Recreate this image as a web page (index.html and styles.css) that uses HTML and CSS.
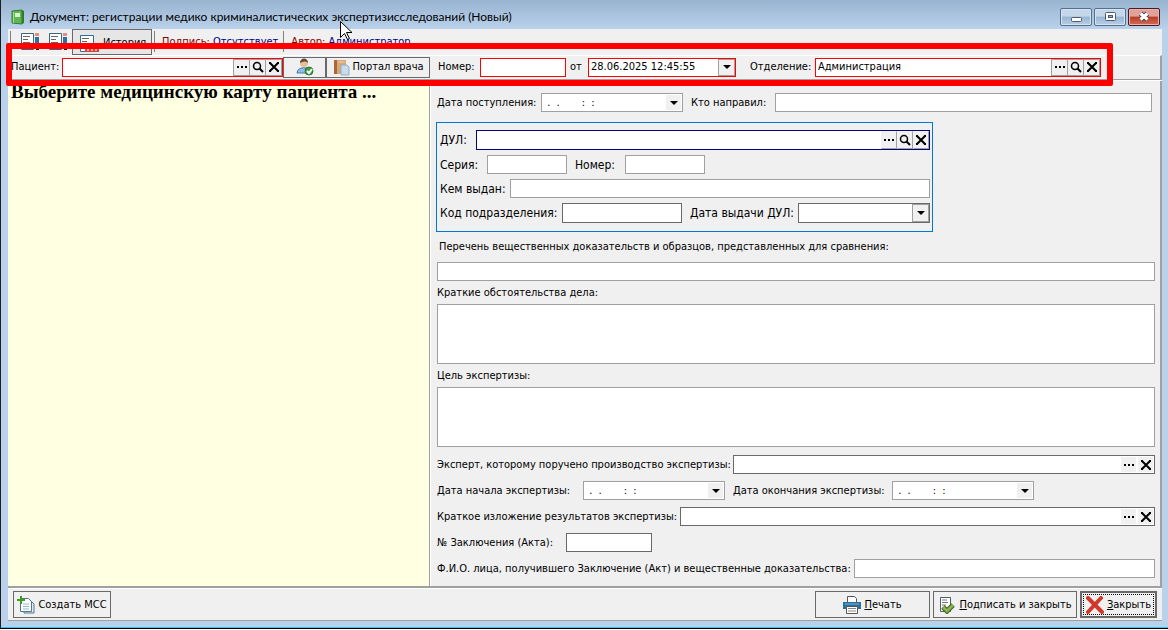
FILE: index.html
```html
<!DOCTYPE html>
<html lang="ru">
<head>
    <meta charset="UTF-8">
    <meta name="viewport" content="width=device-width, initial-scale=1.0">
    <title>Документ: регистрации медико криминалистических экспертизисследований</title>
    <link rel="stylesheet" href="styles.css">
</head>
<body>
    <!-- shared glyphs -->
    <svg class="sprite" aria-hidden="true">
        <symbol id="dots" viewBox="0 0 16 16"><path d="M3 7h2v2H3zM7 7h2v2H7zM11 7h2v2h-2z"/></symbol>
        <symbol id="search" viewBox="0 0 16 16"><circle cx="7" cy="7" r="3.500" fill="none" stroke="#000" stroke-width="1.500"/><path d="M9.500 9.500l3.500 3.500" stroke="#000" stroke-width="2"/></symbol>
        <symbol id="cross" viewBox="0 0 16 16"><path d="M4 4l8 8M12 4l-8 8" stroke="#000" stroke-width="2"/><path d="M3 3h2v2H3zM11 3h2v2h-2zM3 11h2v2H3zM11 11h2v2h-2z"/></symbol>
        <symbol id="arrow" viewBox="0 0 16 16"><path d="M4 6h8l-4 4z"/></symbol>
        <symbol id="doc" viewBox="0 0 20 18"><path d="M1.500 1.500h12v16h-12z" fill="#fff" stroke="#3c6480"/><path d="M3 4.500h7M3 7.500h5M3 10.500h7M3 13.500h5" stroke="#666"/><path d="M15 1h4v3h-4z" fill="#e88a84"/><path d="M15 5h4v7h-4z" fill="#2871a3"/><path d="M16 16h3v2h-3z" fill="#111"/></symbol>
    </svg>

    <div class="window">
        <header class="title-bar">
            <svg class="app-icon" viewBox="0 0 16 16"><path d="M2 2l10-1v14l-10-1z" fill="#62b455" stroke="#2d7d2a"/><path d="M12 1l2 1v12l-2 1z" fill="#2f7d2c"/><path d="M5 4h5v4H5z" fill="#d6f2cf"/><path d="M3.500 3v11" stroke="#a5dd98"/></svg>
            <h1 class="title">Документ: регистрации медико криминалистических экспертизисследований (Новый)</h1>
            <div class="window-buttons">
                <button class="win-btn" aria-label="Свернуть"><svg viewBox="0 0 30 16"><rect x="10.500" y="8.500" width="10" height="4" rx="1" fill="#fff" stroke="#4f5a68"/></svg></button>
                <button class="win-btn" aria-label="Развернуть"><svg viewBox="0 0 30 16"><rect x="10.500" y="3.500" width="10" height="8" rx="1" fill="#fff" stroke="#4f5a68"/><rect x="13.500" y="6.500" width="4" height="2" fill="#8fadca" stroke="#4f5a68"/></svg></button>
                <button class="win-btn win-close" aria-label="Закрыть окно"><svg viewBox="0 0 30 16"><path d="M11.500 4.500l7 6M18.500 4.500l-7 6" stroke="#4f4650" stroke-width="5"/><path d="M11.500 4.500l7 6M18.500 4.500l-7 6" stroke="#fff" stroke-width="3"/></svg></button>
            </div>
        </header>

        <div class="client">
            <div class="toolbar">
                <span class="divider"></span>
                <button class="tool" aria-label="Подписи"><svg class="doc-icon"><use href="#doc"/></svg></button>
                <button class="tool" aria-label="Связи"><svg class="doc-icon"><use href="#doc"/></svg></button>
                <button class="tool history"><svg class="doc-icon" viewBox="0 0 20 18"><path d="M1.500 1.500h13v16h-13z" fill="#fff" stroke="#2f6f99"/><path d="M3 4.500h7M3 7.500h5M3 10.500h7" stroke="#666"/><path d="M6 14h14v4H6z" fill="#c94840"/><path d="M8 16h2M12 16h2M16 16h2" stroke="#fff"/></svg>История</button>
                <span class="divider"></span>
                <span class="status"><span class="status-name">Подпись:</span> Отсутствует</span>
                <span class="divider"></span>
                <span class="status"><span class="status-name">Автор:</span> Администратор</span>
            </div>

            <div class="record-bar">
                <label class="l-patient" for="patient">Пациент:</label>
                <div class="field required f-patient">
                    <input type="text" id="patient">
                    <button class="boxed" aria-label="Выбрать пациента"><svg><use href="#dots"/></svg></button>
                    <button class="boxed" aria-label="Найти пациента"><svg><use href="#search"/></svg></button>
                    <button class="boxed" aria-label="Очистить пациента"><svg><use href="#cross"/></svg></button>
                </div>
                <button class="btn person" aria-label="Карта пациента"><svg viewBox="0 0 18 18"><circle cx="8" cy="5" r="4" fill="#e9bd96"/><path d="M4 5c0-6 8-6 8 0-2-2-5-2-8 0z" fill="#5c4a3c"/><path d="M1 15c0-7 13-7 14 0z" fill="#8dbde8" stroke="#4b7cab"/><circle cx="13" cy="13" r="4" fill="#3f9d49" stroke="#277832"/><path d="M11 13l2 2 3-4" fill="none" stroke="#fff" stroke-width="2"/></svg></button>
                <button class="btn portal"><svg viewBox="0 0 18 18"><path d="M2 2h12v14H2z" fill="#d9a777"/><path d="M2 2h3v14H2z" fill="#a8683a"/><path d="M6 4h7" stroke="#f0d0ae"/><path d="M9 7h6l2 2v8H9z" fill="#c7dced" stroke="#8fadc5"/></svg>Портал врача</button>

                <label class="l-number" for="number">Номер:</label>
                <div class="field required f-number"><input type="text" id="number"></div>
                <label class="l-from" for="created">от</label>
                <div class="field required f-created">
                    <input type="text" id="created" value="28.06.2025 12:45:55">
                    <button class="boxed" aria-label="Календарь"><svg><use href="#arrow"/></svg></button>
                </div>
                <label class="l-dept" for="dept">Отделение:</label>
                <div class="field required f-dept">
                    <input type="text" id="dept" value="Администрация">
                    <button class="boxed" aria-label="Выбрать отделение"><svg><use href="#dots"/></svg></button>
                    <button class="boxed" aria-label="Найти отделение"><svg><use href="#search"/></svg></button>
                    <button class="boxed" aria-label="Очистить отделение"><svg><use href="#cross"/></svg></button>
                </div>
                <div class="highlight"></div>
            </div>

            <div class="content">
                <aside class="card-pane">
                    <h2>Выберите медицинскую карту пациента ...</h2>
                </aside>

                <main class="form">
                    <div class="row arrival">
                        <label class="l-arrival" for="arrival">Дата поступления:</label>
                        <div class="field f-date">
                            <input type="text" id="arrival" value=" .  .       :  :">
                            <button aria-label="Календарь"><svg><use href="#arrow"/></svg></button>
                        </div>
                        <label class="l-sender" for="sender">Кто направил:</label>
                        <div class="field grow"><input type="text" id="sender"></div>
                    </div>

                    <section class="identity">
                        <div class="row">
                            <label class="l-doc" for="doc-type">ДУЛ:</label>
                            <div class="field tall focused grow">
                                <input type="text" id="doc-type">
                                <button class="raised" aria-label="Выбрать документ"><svg><use href="#dots"/></svg></button>
                                <button class="raised" aria-label="Найти документ"><svg><use href="#search"/></svg></button>
                                <button class="raised" aria-label="Очистить документ"><svg><use href="#cross"/></svg></button>
                            </div>
                        </div>
                        <div class="row">
                            <label class="l-series" for="series">Серия:</label>
                            <div class="field f-series"><input type="text" id="series"></div>
                            <label class="l-doc-number" for="doc-number">Номер:</label>
                            <div class="field f-series"><input type="text" id="doc-number"></div>
                        </div>
                        <div class="row">
                            <label class="l-issuer" for="issuer">Кем выдан:</label>
                            <div class="field grow"><input type="text" id="issuer"></div>
                        </div>
                        <div class="row">
                            <label class="l-code" for="code">Код подразделения:</label>
                            <div class="field tall dark f-code"><input type="text" id="code"></div>
                            <label class="l-issued" for="issued">Дата выдачи ДУЛ:</label>
                            <div class="field tall dark grow">
                                <input type="text" id="issued">
                                <button class="boxed" aria-label="Календарь"><svg><use href="#arrow"/></svg></button>
                            </div>
                        </div>
                    </section>

                    <label class="caption lead" for="evidence">Перечень вещественных доказательств и образцов, представленных для сравнения:</label>
                    <div class="field"><input type="text" id="evidence"></div>
                    <label class="caption" for="facts">Краткие обстоятельства дела:</label>
                    <textarea id="facts"></textarea>
                    <label class="caption" for="goal">Цель экспертизы:</label>
                    <textarea id="goal"></textarea>

                    <div class="rows">
                        <div class="row">
                            <label class="l-expert" for="expert">Эксперт, которому поручено производство экспертизы:</label>
                            <div class="field dark grow">
                                <input type="text" id="expert">
                                <button aria-label="Выбрать эксперта"><svg><use href="#dots"/></svg></button>
                                <button aria-label="Очистить эксперта"><svg><use href="#cross"/></svg></button>
                            </div>
                        </div>
                        <div class="row">
                            <label class="l-start" for="start">Дата начала экспертизы:</label>
                            <div class="field f-date">
                                <input type="text" id="start" value=" .  .       :  :">
                                <button aria-label="Календарь"><svg><use href="#arrow"/></svg></button>
                            </div>
                            <label class="l-end" for="end">Дата окончания экспертизы:</label>
                            <div class="field f-date">
                                <input type="text" id="end" value=" .  .       :  :">
                                <button aria-label="Календарь"><svg><use href="#arrow"/></svg></button>
                            </div>
                        </div>
                        <div class="row">
                            <label class="l-summary" for="summary">Краткое изложение результатов экспертизы:</label>
                            <div class="field dark grow">
                                <input type="text" id="summary">
                                <button aria-label="Выбрать текст"><svg><use href="#dots"/></svg></button>
                                <button aria-label="Очистить текст"><svg><use href="#cross"/></svg></button>
                            </div>
                        </div>
                        <div class="row">
                            <label class="l-act" for="act">№ Заключения (Акта):</label>
                            <div class="field dark f-number"><input type="text" id="act"></div>
                        </div>
                        <div class="row">
                            <label class="l-receiver" for="receiver">Ф.И.О. лица, получившего Заключение (Акт) и вещественные доказательства:</label>
                            <div class="field grow"><input type="text" id="receiver"></div>
                        </div>
                    </div>
                </main>
            </div>

            <footer class="actions">
                <button class="btn create"><svg viewBox="0 0 18 18"><path d="M7 5h7l3 3v9H7z" fill="#dfeaf2" stroke="#4f7891"/><path d="M3.500 2.500h8l3 3v10h-11z" fill="#fff" stroke="#4f7891"/><path d="M6 8h6M6 10.500h6M6 13h6" stroke="#9db8cb"/><path d="M4 0v8M0 4h8" stroke="#3d9b1e" stroke-width="2"/></svg>Создать МСС</button>
                <button class="btn print"><svg viewBox="0 0 18 18"><path d="M4.500.5h7l2 2v5h-9z" fill="#fff" stroke="#555"/><path d="M0 6h18v7H0z" fill="#2871a3"/><path d="M2 8h14" stroke="#7db4da"/><path d="M3.500 10.500h11v7h-11z" fill="#fff" stroke="#555"/><path d="M5 12.500h8M5 15h8" stroke="#888"/></svg><span><u>П</u>ечать</span></button>
                <button class="btn sign"><svg viewBox="0 0 18 18"><path d="M2.500 1.500h10v14h-10z" fill="#fff" stroke="#4d5f6e"/><path d="M4 4h5M4 6.500h6M4 9h4M4 11.500h3" stroke="#777"/><path d="M5 11l4 4 6-6" fill="none" stroke="#3e5a1e" stroke-width="5"/><path d="M5 11l4 4 6-6" fill="none" stroke="#8bb450" stroke-width="3"/></svg><span><u>П</u>одписать и закрыть</span></button>
                <button class="btn close"><svg viewBox="0 0 18 18"><path d="M2 2l14 14M15 2L2 16" stroke="#d0382a" stroke-width="4" stroke-linecap="round"/></svg><span><u>З</u>акрыть</span></button>
            </footer>
        </div>

        <svg class="cursor" viewBox="0 0 13 20"><path d="M.5.5v16l4-4 3 6 2-1-3-6h5.500z" fill="#fff" stroke="#000"/></svg>
    </div>
</body>
</html>
```
FILE: styles.css
```css
* {
    box-sizing: border-box;
}
body {
    margin: 0;
    font-family: "DejaVu Sans Condensed", "DejaVu Sans", sans-serif;
    font-size: 11px;
    line-height: 14px;
    color: #000;
    background-color: #fff;
}
button, input, textarea {
    font: inherit;
    color: inherit;
    margin: 0;
    border-radius: 0;
}
label {
    flex: none;
    white-space: nowrap;
}
.sprite {
    display: none;
}

/* window frame */
.window {
    position: relative;
    min-height: calc(100vh - 1px);
    display: flex;
    flex-direction: column;
    padding: 0 6px 7px 7px;
    border-left: 1px solid #1b1f24;
    border-bottom: 1px solid #000;
    background: linear-gradient(#99b4d1, #b9d1ea 29px);
    box-shadow: inset 0 -1px #35c4e8;
}
.title-bar {
    height: 29px;
    display: flex;
    align-items: center;
    padding: 5px 2px 0 2px;
}
.app-icon {
    width: 16px;
    height: 16px;
    margin-right: 4px;
}
.title {
    flex: 1;
    margin: 0;
    font-family: Lato, sans-serif;
    font-size: 12px;
    font-weight: normal;
    line-height: 16px;
    white-space: nowrap;
}
.window-buttons {
    display: flex;
    gap: 2px;
}
.win-btn {
    width: 32px;
    height: 18px;
    padding: 0;
    border: 1px solid #566f8c;
    border-radius: 2px;
    background: linear-gradient(#c3d6ea 45%, #9ab5d2 50%, #b7cfe6);
    box-shadow: inset 0 0 0 1px #d5e3f1;
}
.win-btn svg {
    display: block;
    width: 30px;
    height: 16px;
}
.win-close {
    border-color: #4b1a20;
    background: linear-gradient(#e2a299 45%, #bb3a24 50%, #d0705c);
    box-shadow: inset 0 0 0 1px #e9b5ab;
}
.cursor {
    position: absolute;
    left: 339px;
    top: 21px;
    width: 13px;
    height: 20px;
}
.client {
    flex: 1;
    display: flex;
    flex-direction: column;
    background-color: #f0f0f0;
    border-bottom: 1px solid #a0a0a0;
}

/* toolbar */
.toolbar {
    height: 26px;
    display: flex;
    align-items: stretch;
    padding-left: 2px;
}
.divider {
    width: 1px;
    margin: 2px 1px 3px 0;
    background-color: #808080;
}
.tool {
    width: 28px;
    padding: 3px 0 0 8px;
    border: none;
    background: none;
    display: flex;
}
.history {
    width: 80px;
    margin: 0 2px 0 4px;
    padding: 2px 0 0 6px;
    gap: 4px;
    align-items: center;
    border: 1px solid #696969;
    background-color: #e6e6e6;
}
.doc-icon {
    flex: none;
    width: 20px;
    height: 18px;
}
.status {
    padding: 6px 5px 0 6px;
    color: #000080;
}
.status-name {
    color: #800000;
}

/* fields */
.field {
    min-width: 0;
    height: 19px;
    display: flex;
    border: 1px solid #a0a0a0;
    background-color: #fff;
}
.field input {
    flex: 1;
    min-width: 0;
    padding: 0 2px;
    border: none;
    outline: none;
    background: none;
    white-space: pre;
}
.field button {
    flex: none;
    width: 15px;
    margin: 1px;
    padding: 0;
    border: none;
    background-color: #f0f0f0;
    display: flex;
    align-items: center;
    justify-content: center;
}
.field button svg {
    flex: none;
    width: 16px;
    height: 16px;
}
.field .boxed {
    width: 17px;
    margin: 0 0 0 -1px;
    border: 1px solid #a0a0a0;
}
.field .raised {
    width: 16px;
    margin: 0;
    border: 1px solid #a0a0a0;
    border-top-color: #f0f0f0;
    border-left-color: #f0f0f0;
}
.tall {
    height: 20px;
}
.required {
    border-color: #f00;
}
.dark {
    border-color: #696969;
}
.focused {
    border-color: #000080;
}
.grow {
    flex: 1;
}
textarea {
    display: block;
    width: 100%;
    height: 60px;
    border: 1px solid #a0a0a0;
    resize: none;
    outline: none;
}

/* buttons */
.btn {
    display: flex;
    align-items: center;
    justify-content: center;
    padding: 0;
    border: 1px solid #696969;
    background-color: #f0f0f0;
    white-space: nowrap;
}
.btn svg {
    flex: none;
    width: 18px;
    height: 18px;
}

/* patient and record fields */
.record-bar {
    position: relative;
    height: 25px;
    display: flex;
    align-items: center;
    padding: 0 0 1px 3px;
    border-top: 1px solid #fff;
    border-right: 2px solid #a0a0a0;
    border-bottom: 1px solid #a0a0a0;
}
.record-bar .btn {
    height: 21px;
}
.l-patient {
    width: 51px;
}
.f-patient {
    width: 221px;
}
.person {
    width: 43px;
}
.portal {
    width: 104px;
    gap: 2px;
}
.l-number {
    width: 50px;
    padding-left: 8px;
}
.f-number {
    width: 86px;
}
.l-from {
    width: 22px;
    padding-left: 4px;
}
.f-created {
    width: 148px;
}
.l-dept {
    width: 79px;
    padding-left: 14px;
}
.f-dept {
    width: 286px;
}
.highlight {
    position: absolute;
    left: -2px;
    top: -13px;
    width: 1107px;
    height: 43px;
    border: 6px solid #f00;
    border-radius: 2px;
    pointer-events: none;
}

/* content */
.content {
    flex: 1;
    display: flex;
    border-top: 1px solid #fff;
    border-bottom: 2px solid #a0a0a0;
}
.card-pane {
    flex: none;
    width: 422px;
    padding-left: 3px;
    border-right: 1px solid #a0a0a0;
    background-color: #ffffe1;
}
.card-pane h2 {
    margin: 0;
    font-family: "Liberation Serif", serif;
    font-size: 19px;
    line-height: 22px;
}
.form {
    flex: 1;
    min-width: 0;
    padding: 12px 5px 7px 6px;
    border-left: 1px solid #fff;
    border-right: 2px solid #a0a0a0;
}
.row {
    display: flex;
    align-items: center;
}
.arrival {
    padding-right: 3px;
}
.l-arrival {
    width: 104px;
}
.f-date {
    width: 142px;
}
.l-sender {
    width: 92px;
    padding-left: 8px;
}

/* identity document */
.identity {
    width: 497px;
    display: flex;
    flex-direction: column;
    gap: 5px;
    margin: 10px 0 0 -1px;
    padding: 7px 2px 8px 3px;
    border: 1px solid #0078d7;
    font-size: 12px;
}
.l-doc {
    width: 36px;
}
.l-series {
    width: 47px;
}
.f-series {
    width: 80px;
}
.l-doc-number {
    width: 58px;
    padding-left: 8px;
}
.l-issuer {
    width: 70px;
}
.l-code {
    width: 122px;
}
.f-code {
    width: 120px;
}
.l-issued {
    width: 116px;
    padding-left: 8px;
}

.caption {
    display: block;
    padding: 5px 0 4px;
}
.lead {
    padding: 8px 0 8px 2px;
}
.rows {
    display: flex;
    flex-direction: column;
    gap: 7px;
    margin-top: 8px;
}
.l-expert {
    width: 296px;
}
.l-start {
    width: 146px;
}
.l-end {
    width: 167px;
    padding-left: 8px;
}
.l-summary {
    width: 243px;
}
.l-act {
    width: 129px;
}
.l-receiver {
    width: 417px;
}

/* bottom buttons */
.actions {
    display: flex;
    gap: 3px;
    padding: 2px 5px;
    border-top: 1px solid #fff;
}
.actions .btn {
    height: 27px;
    gap: 3px;
}
.create {
    width: 98px;
    margin-right: auto;
}
.print {
    width: 115px;
}
.sign {
    width: 144px;
}
.actions .close {
    width: 77px;
    border-width: 2px;
    outline: 1px dotted #000;
    outline-offset: -4px;
}
```
